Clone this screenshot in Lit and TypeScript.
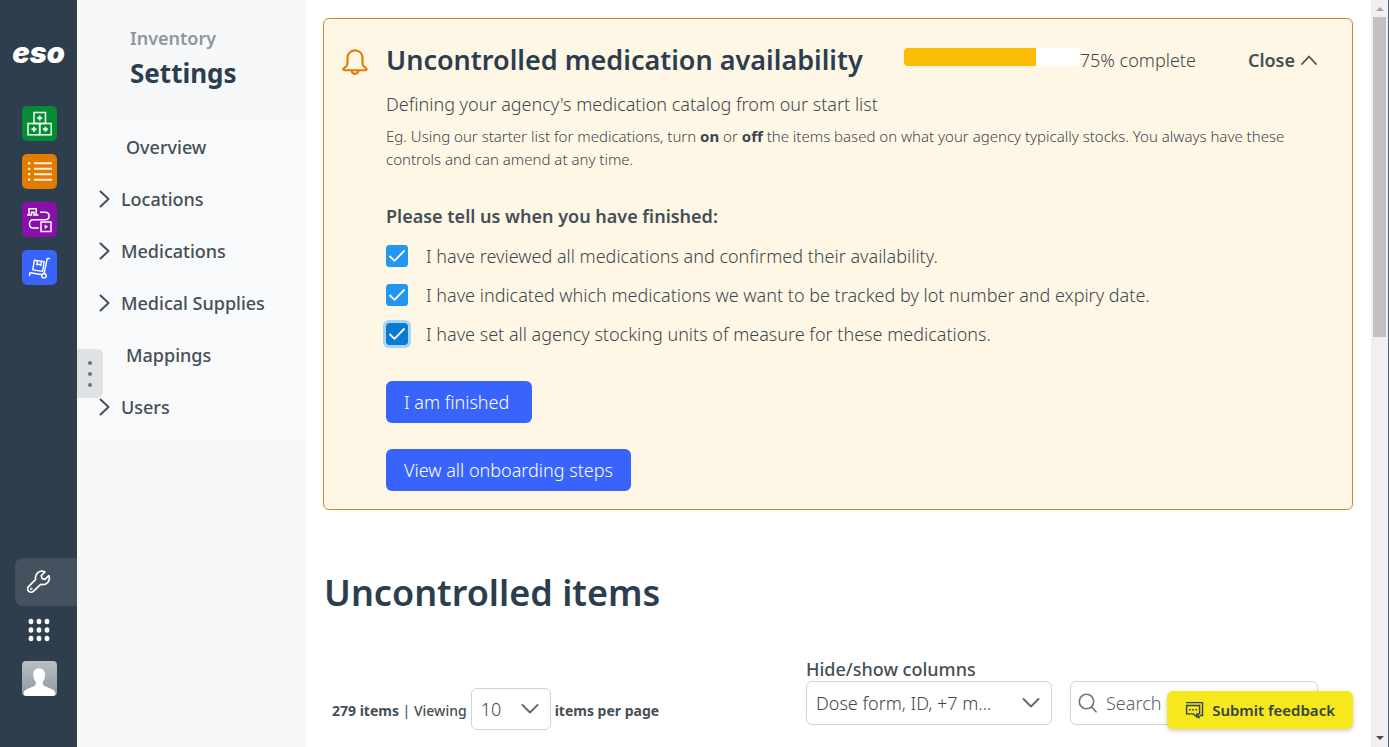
import { LitElement, html, css, svg } from "lit";
import { customElement, property, state } from "lit/decorators.js";
import { classMap } from "lit/directives/class-map.js";

const chevronRight = html`<svg class="chev" viewBox="0 0 12 18" width="12" height="18" fill="none" stroke="currentColor" stroke-width="2" stroke-linecap="round" stroke-linejoin="round" aria-hidden="true"><path d="M1.500 1.500 9.500 9l-8 7.500" /></svg>`;

const plus = (x: number, y: number) =>
  svg`<path d="M${x - 2.5} ${y}h5M${x} ${y - 2.5}v5" stroke-width="1.9" />`;

const stockIcon = html`<svg viewBox="0 0 35 35" width="35" height="35" fill="none" stroke="#e6f6e6" stroke-width="1.6" aria-hidden="true">
  <rect x="12" y="6.500" width="11.500" height="11" /><rect x="6" y="17.500" width="11.700" height="11.300" /><rect x="17.700" y="17.500" width="11.500" height="11.300" />
  ${plus(17.7, 12)}${plus(12, 23.2)}${plus(23.4, 23.2)}
</svg>`;

const listIcon = html`<svg viewBox="0 0 35 35" width="35" height="35" fill="none" stroke="#fff0dc" stroke-width="1.9" aria-hidden="true">
  <path d="M12 9.300h18M12 14.800h18M12 20.200h18M12 25.700h18" /><path d="M6 9.300h2.300M6 14.800h2.300M6 20.200h2.300M6 25.700h2.300" stroke-width="2.300" />
</svg>`;

const routeIcon = html`<svg viewBox="0 0 35 35" width="35" height="35" fill="none" stroke="#fff" stroke-width="1.5" aria-hidden="true">
  <path d="M7 12.500V6.800h7.200v5.700M5 13h4.500V10.200h2.500V13h4.500" />
  <path d="M18 10.200h5.300c5 0 5 7.600 0 7.600H11.800c-5.800 0-5.800 8.200 0 8.200h5" />
  <rect x="19" y="20" width="10" height="9.500" /><path d="m22.700 22.600 3.400 2.200-3.400 2.200z" fill="#fff" stroke="none" />
</svg>`;

const cartIcon = html`<svg viewBox="0 0 35 35" width="35" height="35" fill="none" stroke="#fff" stroke-width="1.4" stroke-linecap="round" stroke-linejoin="round" aria-hidden="true">
  <path d="m12.400 10.200 9.700 1.400-1.500 9.800-9.800-1.500z" /><path d="m15.400 10.800-.6 4 2.200-.7 1.900 1.300.6-4" />
  <path d="M27.500 8.500h-2.300L22 24M7.500 25.500l.5-2.800 12.500 2" /><circle cx="22" cy="25.700" r="2.200" />
</svg>`;

const wrenchIcon = html`<svg viewBox="0 0 24 24" width="24" height="24" fill="none" stroke="#fff" stroke-width="1.7" stroke-linecap="round" stroke-linejoin="round" aria-hidden="true">
  <path d="M17.900 1.900a6.500 6.500 0 0 0-9.200 7.500L1.700 16.300a3.400 3.400 0 0 0 4.900 4.900l7.100-6.900a6.500 6.500 0 0 0 8.100-8.700L18 9.300l-2.900-.7-.8-3z" /><circle cx="4.300" cy="18.700" r=".4" />
</svg>`;

const gridIcon = html`<svg viewBox="0 0 22 24" width="22" height="24" fill="#fff" aria-hidden="true">
  ${[3, 11, 19].map((x) => [3.5, 12, 20.5].map((y) => svg`<ellipse cx=${x} cy=${y} rx="2.400" ry="2.700" />`))}
</svg>`;

const avatarIcon = html`<svg viewBox="0 0 35 35" width="35" height="35" aria-hidden="true">
  <defs><linearGradient id="g" x1="0" y1="0" x2="0" y2="1"><stop offset="0" stop-color="#b9bfc3" /><stop offset="1" stop-color="#8f999f" /></linearGradient></defs>
  <rect width="35" height="35" rx="4" fill="url(#g)" />
  <path d="M17 7.300c-4 0-6 3-5.700 7 .2 3.500 1.500 5.500 2.500 6.800.3 2.500-.3 3.600-2.500 4.500-4.500 1.700-8.300 2.600-9.800 6.400 0 2 1 3 3 3h26c2 0 3-1 3-3-1.600-3.900-5.800-4.700-10-6.400-2.300-1-3-2-2.700-4.500 1.200-1.500 2.200-3.500 2.200-6.800.2-4.200-2-7-6-7z" fill="#fff" />
</svg>`;

const bellIcon = html`<svg viewBox="0 0 26 28" width="26" height="28" fill="none" stroke="#e07c00" stroke-width="2.100" stroke-linejoin="round" aria-hidden="true">
  <path d="M13 2.400c-4.800 0-7.500 3.400-7.500 7.600v5.200c0 2-.7 3-2.200 4-1.300.9-2 1.200-2 2 0 .7.500 1 1.300 1h20.800c.8 0 1.300-.3 1.300-1 0-.8-.7-1.100-2-2-1.500-1-2.200-2-2.200-4V10c0-4.200-2.700-7.600-7.500-7.600z" />
  <path d="M9.600 22.500c.2 2.200 1.500 3.400 3.400 3.400s3.200-1.200 3.400-3.400" />
</svg>`;

const feedbackIcon = html`<svg viewBox="0 0 19 19" width="19" height="19" fill="none" stroke="#34424a" stroke-width="1.400" aria-hidden="true">
  <path d="M1 1.600h16.500v12.900h-2.500" /><path d="M1.600 4.500h13v8.400h-2.800v3l-3.400-3H1.600z" /><path d="M11.500 14.500h1.500l1 2.700v-2.700" /><path d="M4 8.700h1.700M7.200 8.700h1.700M10.400 8.700h1.700" stroke-width="1.600" />
</svg>`;

@customElement("app-rail")
export class AppRail extends LitElement {
  static styles = css`
    :host { display: flex; flex-direction: column; width: 77px; background: #2f3e4d; box-sizing: border-box; padding: 31px 0 45px; }
    .logo { color: #fff; font: italic 900 29px/44px Inter, sans-serif; text-align: center; text-decoration: none; }
    .apps { display: flex; flex-direction: column; align-items: center; gap: 13px; margin-top: 31px; padding-left: 2px; }
    .app { display: flex; padding: 0; border: 0; border-radius: 5px; cursor: pointer; }
    .green { background: #058a36; }
    .orange { background: #e27c00; }
    .purple { background: #880fac; }
    .blue { background: #3864fb; }
    .tools { display: flex; flex-direction: column; margin-top: auto; }
    .tool { display: flex; align-items: center; height: 48px; margin-left: 15px; padding: 0 12px; border: 0; border-radius: 8px 0 0 8px; background: none; cursor: pointer; }
    .tool.on { background: #44515f; }
    .tool.grid { padding-left: 13px; }
    .tool.user { padding-left: 7px; }
  `;
  render() {
    return html`
      <a class="logo" href="#">eso</a>
      <nav class="apps" aria-label="Applications">
        <button class="app green" aria-label="Stock">${stockIcon}</button>
        <button class="app orange" aria-label="Lists">${listIcon}</button>
        <button class="app purple" aria-label="Transfers">${routeIcon}</button>
        <button class="app blue" aria-label="Orders">${cartIcon}</button>
      </nav>
      <div class="tools">
        <button class="tool on" aria-label="Settings">${wrenchIcon}</button>
        <button class="tool grid" aria-label="All apps">${gridIcon}</button>
        <button class="tool user" aria-label="Profile">${avatarIcon}</button>
      </div>
    `;
  }
}

interface NavItem { label: string; group: boolean; }

@customElement("settings-nav")
export class SettingsNav extends LitElement {
  static styles = css`
    :host { display: block; position: relative; width: 229px; background: #f7f8fa; font-family: "Noto Sans", sans-serif; }
    .head { box-sizing: border-box; height: 121px; padding: 24px 0 0 53px; }
    .eyebrow { margin: 0; color: #8d979b; font-size: 18px; font-weight: 600; line-height: 28px; }
    .title { margin: 3px 0 0; color: #2c3e4e; font-size: 26px; font-weight: 700; line-height: 36px; }
    .list { margin: 0; padding: 0 0 4px; list-style: none; background: #f8f9fb; }
    .link { display: flex; align-items: center; gap: 10px; height: 52px; padding-left: 22px; color: #454f56; font-size: 18px; font-weight: 500; text-decoration: none; }
    .link.leaf { padding-left: 49px; }
    .handle { position: absolute; left: 0; top: 349px; display: flex; flex-direction: column; align-items: center; justify-content: center; gap: 7px; width: 26px; height: 49px; padding: 0; border: 0; border-radius: 0 6px 6px 0; background: #dfe1e3; cursor: pointer; }
    .dot { width: 4px; height: 4px; border-radius: 50%; background: #66747c; }
  `;
  private items: NavItem[] = [
    { label: "Overview", group: false },
    { label: "Locations", group: true },
    { label: "Medications", group: true },
    { label: "Medical Supplies", group: true },
    { label: "Mappings", group: false },
    { label: "Users", group: true },
  ];
  render() {
    return html`
      <header class="head"><p class="eyebrow">Inventory</p><h1 class="title">Settings</h1></header>
      <nav aria-label="Settings">
        <ul class="list">
          ${this.items.map((i) => html`<li><a href="#" class=${classMap({ link: true, leaf: !i.group })}>${i.group ? chevronRight : ""}${i.label}</a></li>`)}
        </ul>
      </nav>
      <button class="handle" aria-label="Resize panel"><span class="dot"></span><span class="dot"></span><span class="dot"></span></button>
    `;
  }
}

@customElement("onboarding-card")
export class OnboardingCard extends LitElement {
  static styles = css`
    :host { display: flex; gap: 18px; padding: 23px 35px 18px 18px; border: 1px solid #c98a28; border-radius: 6px; background: #fff7e5; color: #3d474e; font: 300 18px/24px "Noto Sans", sans-serif; }
    .bell { flex: none; padding-top: 6px; }
    .body { flex: 1; min-width: 0; }
    .head { display: flex; align-items: center; }
    .title { margin: 0; color: #2c3e4e; font-size: 27px; font-weight: 600; line-height: 36px; }
    .progress { display: flex; align-items: flex-start; margin-left: 41px; }
    .track { width: 176px; height: 18px; border-radius: 4px; background: #fff; overflow: hidden; }
    .fill { height: 100%; background: #fbbc05; }
    .close { display: flex; align-items: center; gap: 6px; margin-left: auto; padding: 0; border: 0; background: none; color: #454f56; font: 600 18px/24px "Noto Sans", sans-serif; cursor: pointer; }
    .lead { margin: 14px 0 9px; }
    .hint { margin: 0; font-size: 15px; line-height: 23px; }
    .em { font-weight: 700; }
    .ask { margin: 33px 0 8px; color: #454f56; font-size: 18px; font-weight: 600; line-height: 24px; }
    .check { display: flex; align-items: center; gap: 18px; height: 39px; }
    .box { flex: none; display: grid; width: 22px; height: 22px; border-radius: 3px; }
    .box > * { grid-area: 1 / 1; }
    .input { appearance: none; width: 22px; height: 22px; margin: 0; border: 1px solid #2196f3; border-radius: 3px; background: #fff; cursor: pointer; }
    .input:checked { background: #2196f3; }
    .focus { box-shadow: 0 0 0 3px #a6d5fa; }
    .focus .input { border-color: #0b7ad1; background: #0b7ad1; }
    .mark { pointer-events: none; }
    .actions { display: flex; flex-direction: column; align-items: flex-start; gap: 26px; margin-top: 28px; }
    .btn { min-width: 146px; height: 42px; padding: 0 18px; border: 0; border-radius: 6px; background: #3864fb; color: #fff; font: inherit; text-align: left; cursor: pointer; }
  `;
  @property({ type: Number }) percent = 75;
  @state() private open = true;
  private steps = [
    "I have reviewed all medications and confirmed their availability.",
    "I have indicated which medications we want to be tracked by lot number and expiry date.",
    "I have set all agency stocking units of measure for these medications.",
  ];
  private toggle() { this.open = !this.open; }
  private details() {
    return html`
      <p class="lead">Defining your agency's medication catalog from our start list</p>
      <p class="hint">Eg. Using our starter list for medications, turn <b class="em">on</b> or <b class="em">off</b> the items based on what your agency typically stocks. You always have these controls and can amend at any time.</p>
      <h3 class="ask">Please tell us when you have finished:</h3>
      ${this.steps.map((s, i) => html`
        <label class="check">
          <span class=${classMap({ box: true, focus: i === 2 })}>
            <input class="input" type="checkbox" checked />
            <svg class="mark" viewBox="0 0 22 22" width="22" height="22" fill="none" stroke="#fff" stroke-width="1.8" aria-hidden="true"><path d="m3.500 11 5 4.800L18.500 5.500" /></svg>
          </span>
          <span>${s}</span>
        </label>`)}
      <div class="actions">
        <button class="btn">I am finished</button>
        <button class="btn">View all onboarding steps</button>
      </div>`;
  }
  render() {
    return html`
      <div class="bell">${bellIcon}</div>
      <div class="body">
        <div class="head">
          <h2 class="title">Uncontrolled medication availability</h2>
          <div class="progress">
            <div class="track" role="progressbar" aria-label="Onboarding" aria-valuenow=${this.percent}><div class="fill" style="width:${this.percent}%"></div></div>
            <span>${this.percent}% complete</span>
          </div>
          <button class="close" @click=${this.toggle}>Close<svg viewBox="0 0 16 10" width="16" height="10" fill="none" stroke="currentColor" stroke-width="1.8" stroke-linecap="round" stroke-linejoin="round" aria-hidden="true"><path d="M1 9l7-7.500L15 9" /></svg></button>
        </div>
        ${this.open ? this.details() : ""}
      </div>
    `;
  }
}

@customElement("items-toolbar")
export class ItemsToolbar extends LitElement {
  static styles = css`
    :host { display: flex; justify-content: space-between; align-items: flex-start; padding: 0 35px 0 9px; color: #454f56; font-family: "Noto Sans", sans-serif; }
    .paging { display: flex; align-items: baseline; gap: 4px; padding-top: 31px; font-size: 14px; font-weight: 500; line-height: 24px; }
    .strong { font-weight: 700; }
    .filters { display: flex; align-items: flex-end; gap: 18px; }
    .field { display: flex; flex-direction: column; width: 246px; }
    .label { font-size: 18px; font-weight: 500; line-height: 24px; }
    .control { display: grid; align-items: center; }
    .control > * { grid-area: 1 / 1; }
    .select, .input { appearance: none; box-sizing: border-box; width: 100%; height: 44px; margin: 0; padding: 0 9px; border: 1px solid #ced4da; border-radius: 6px; background: #fff; color: #3d474e; font: 300 18px/24px "Noto Sans", sans-serif; outline: none; }
    .pager { width: 80px; }
    .pager .select { height: 42px; }
    .arrow { justify-self: end; margin-right: 12px; color: #5f6b73; pointer-events: none; }
    .search { width: 248px; }
    .input { padding-left: 35px; }
    .input::placeholder { color: #56626a; opacity: 1; }
    .glass { justify-self: start; margin-left: 8px; color: #6c757d; pointer-events: none; z-index: 1; }
  `;
  private arrow = html`<svg class="arrow" viewBox="0 0 18 10" width="18" height="10" fill="none" stroke="currentColor" stroke-width="1.9" stroke-linecap="round" stroke-linejoin="round" aria-hidden="true"><path d="m1.500 1 7.500 7.500L16.500 1" /></svg>`;
  render() {
    return html`
      <div class="paging">
        <span><span class="strong">279 items</span> | Viewing</span>
        <span class="control pager">
          <select class="select" aria-label="Items per page"><option>10</option><option>25</option><option>50</option></select>${this.arrow}
        </span>
        <span class="strong">items per page</span>
      </div>
      <div class="filters">
        <div class="field">
          <label class="label" for="cols">Hide/show columns</label>
          <span class="control"><select class="select" id="cols"><option>Dose form, ID, +7 m...</option></select>${this.arrow}</span>
        </div>
        <span class="control search">
          <svg class="glass" viewBox="0 0 19 20" width="19" height="20" fill="none" stroke="currentColor" stroke-width="1.6" stroke-linecap="round" aria-hidden="true"><circle cx="8.500" cy="8.500" r="7.200" /><path d="m13.500 14 4.500 4.800" /></svg>
          <input class="input" type="search" placeholder="Search" aria-label="Search" />
        </span>
      </div>
    `;
  }
}

@customElement("app-root")
export class AppRoot extends LitElement {
  static styles = css`
    :host { display: flex; position: relative; height: 100vh; overflow: hidden; background: #fff; font-family: "Noto Sans", sans-serif; }
    app-rail, settings-nav { flex: none; }
    .main { flex: 1; min-width: 0; padding: 18px 18px 0 17px; overflow: hidden; }
    .title { margin: 59px 0 40px 1px; color: #2c3e4e; font-size: 36px; font-weight: 600; line-height: 48px; }
    .scroll { flex: none; display: flex; flex-direction: column; align-items: center; justify-content: space-between; width: 17px; border-right: 1px solid #596069; background: #f0f0f0; }
    .up, .down { width: 0; height: 0; border: 4px solid transparent; }
    .up { margin-top: 3px; border-bottom-color: #a3a3a3; }
    .down { margin-bottom: 3px; border-top-color: #4c4c4c; }
    .thumb { width: 13px; height: 320px; margin: 6px 0 auto; background: #c1c1c1; }
    .feedback { position: absolute; right: 36px; bottom: 18px; display: flex; align-items: center; gap: 8px; height: 38px; padding: 0 18px; border: 0; border-radius: 6px; background: #f7e71d; box-shadow: 0 2px 5px rgba(0, 0, 0, 0.2); color: #34424a; font: 600 15px/24px "Noto Sans", sans-serif; cursor: pointer; }
  `;
  render() {
    return html`
      <app-rail></app-rail>
      <settings-nav></settings-nav>
      <main class="main">
        <onboarding-card .percent=${75}></onboarding-card>
        <h2 class="title">Uncontrolled items</h2>
        <items-toolbar></items-toolbar>
      </main>
      <div class="scroll" aria-hidden="true"><span class="up"></span><span class="thumb"></span><span class="down"></span></div>
      <button class="feedback">${feedbackIcon}Submit feedback</button>
    `;
  }
}
